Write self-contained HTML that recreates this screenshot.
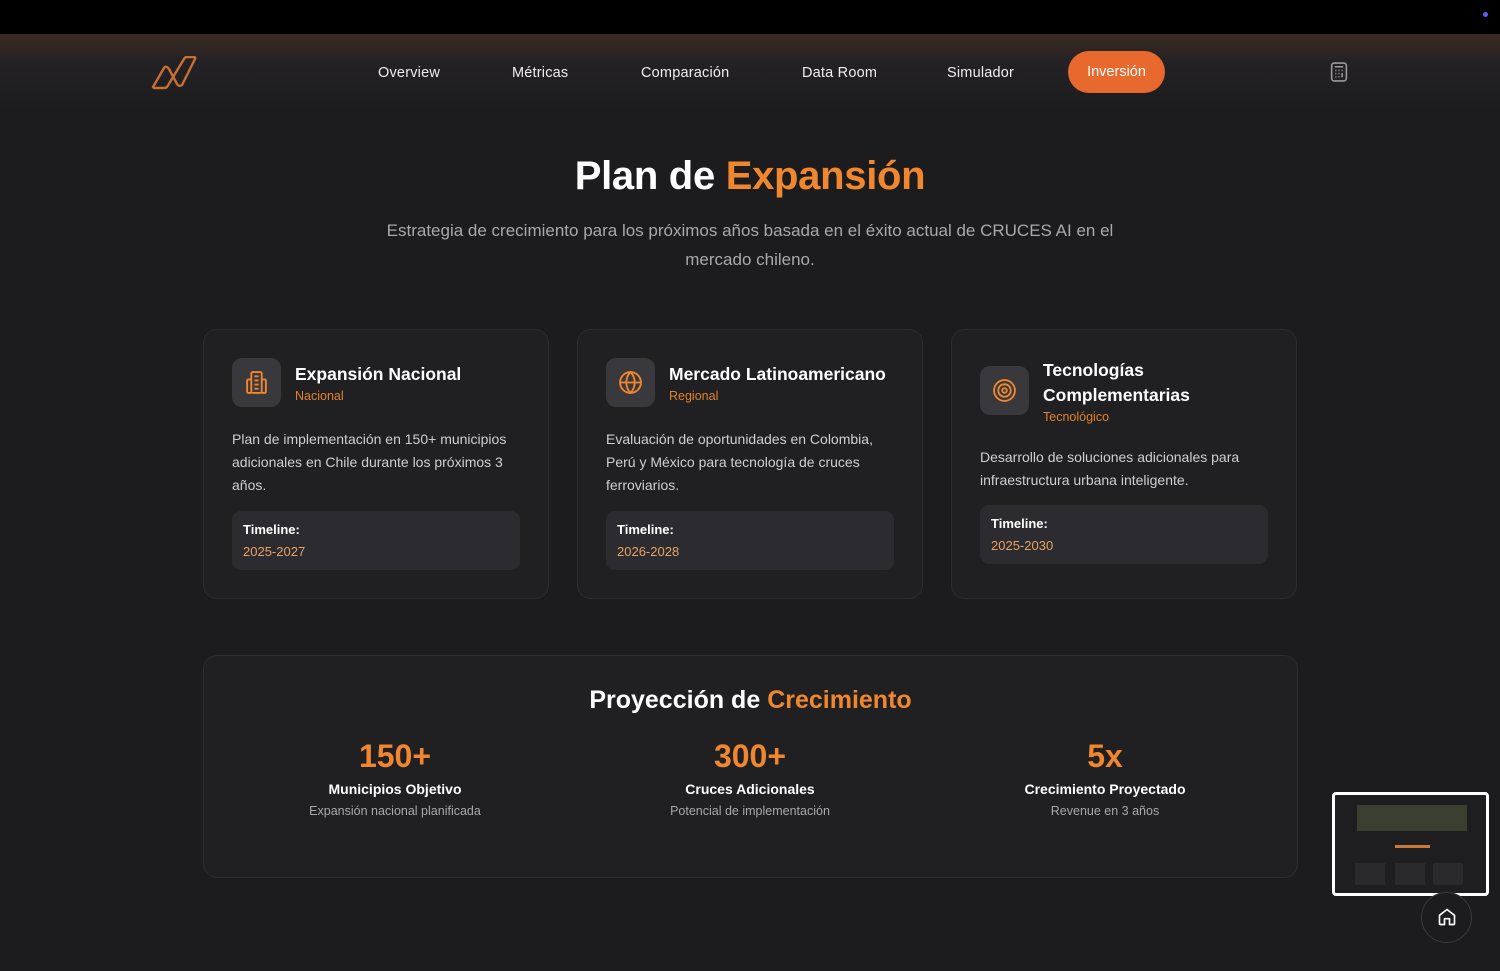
<!DOCTYPE html>
<html><head><meta charset="utf-8"><style>
*{margin:0;padding:0;box-sizing:border-box}
body{width:1500px;height:971px;background:#1c1c1f;font-family:"Liberation Sans",sans-serif;color:#fff;position:relative;overflow:hidden}
.top{position:absolute;top:0;left:0;width:1500px;height:34px;background:#000}
.dot{position:absolute;right:12px;top:12px;width:5px;height:5px;border-radius:50%;background:#5560ff}
.nav{position:absolute;top:34px;left:0;width:1500px;height:76px;background:linear-gradient(180deg,#3a2a22 0%,#232124 40%,#1c1c1f 100%)}
.nav a{position:absolute;top:31px;font-size:14.5px;color:#eee;letter-spacing:.2px}
.btn{position:absolute;left:1068px;top:17px;width:97px;height:42px;border-radius:21px;background:#e8692e;color:#fff;font-size:14.5px;text-align:center;line-height:43px}
h1{position:absolute;top:154px;width:1500px;text-align:center;font-size:40px;font-weight:bold;letter-spacing:-.3px}
.o{color:#f0872f}
.sub{position:absolute;top:217px;left:370px;width:760px;text-align:center;font-size:17px;line-height:28.5px;color:#a8a8ad}
.card{position:absolute;top:329px;width:346px;height:270px;background:#202023;border:1px solid #2d2d31;border-radius:14px}
.ic{position:absolute;left:28px;top:28px;width:49px;height:49px;border-radius:10px;background:#38383d}
.ic svg{position:absolute;left:12px;top:12px}
.ct{position:absolute;left:91px;font-size:17.5px;font-weight:bold;line-height:25px}
.cs{font-size:12.5px;color:#e0822e;font-weight:normal;line-height:16px;display:block;margin-top:1px}
.cd{position:absolute;left:28px;right:28px;font-size:14px;line-height:23px;color:#cfcfd2}
.tl{position:absolute;left:28px;right:28px;height:59px;background:#2c2c30;border-radius:9px;padding:11px 11px}
.tl b{font-size:13px;display:block;margin-bottom:6px}
.tl span{font-size:13px;color:#e8a265}
.proj{position:absolute;left:203px;top:655px;width:1095px;height:223px;background:#202023;border:1px solid #2d2d31;border-radius:14px}
.proj h2{position:absolute;top:30px;width:100%;text-align:center;font-size:25px}
.st{position:absolute;top:82px;width:300px;text-align:center}
.st .n{font-size:32px;font-weight:bold;color:#f0872f}
.st .l{font-size:14px;font-weight:bold;margin-top:6px}
.st .d{font-size:12.5px;color:#a8a8ad;margin-top:7px}
.thumb{position:absolute;left:1332px;top:792px;width:157px;height:104px;border:3px solid #fff;border-radius:4px;background:#1e1e20;overflow:hidden}
.home{position:absolute;left:1421px;top:892px;width:51px;height:51px;border-radius:50%;background:#1c1c1f;border:1px solid #3a3a3e}
</style></head><body>
<div class="top"><div class="dot"></div></div>
<div class="nav">
<svg style="position:absolute;left:151px;top:22px" width="46" height="34" viewBox="0 0 46 34" fill="none" stroke="#c86f33" stroke-width="2.4" stroke-linejoin="round"><path d="M2 31 L13 12 Q15 9 18 13 L26 28 Q28 31 31 29 L44 3 Q45 1 42 1 L36 1 Q34 1 33 3 L16 31 Q15 32 13 32 L3 32 Z"/></svg>
<a style="left:378px">Overview</a><a style="left:512px">Métricas</a><a style="left:641px">Comparación</a><a style="left:802px">Data Room</a><a style="left:947px">Simulador</a>
<div class="btn">Inversión</div>
<svg style="position:absolute;left:1330px;top:28px" width="18" height="20" viewBox="0 0 16 19" fill="none" stroke="#9a9a9f" stroke-width="1.5"><rect x="1" y="1" width="14" height="17" rx="2.5"/><path d="M4 4.5h8M4.5 8h1M7.5 8h1M10.5 8h1M4.5 11h1M7.5 11h1M4.5 14h1M7.5 14h1M11 10.5v4"/></svg>
</div>
<h1>Plan de <span class="o">Expansión</span></h1>
<div class="sub">Estrategia de crecimiento para los próximos años basada en el éxito actual de CRUCES AI en el mercado chileno.</div>

<div class="card" style="left:203px">
<div class="ic"><svg width="25" height="25" viewBox="0 0 24 24" fill="none" stroke="#f0872f" stroke-width="1.8" stroke-linejoin="round"><rect x="7" y="2" width="10" height="20" rx="1.5"/><path d="M7 9H4.5Q3 9 3 10.5V20.5Q3 22 4.5 22H7M17 9h2.5Q21 9 21 10.5V20.5Q21 22 19.5 22H17M10 6h4M10 10h4M10 14h4M10 18h4"/></svg></div>
<div class="ct" style="top:32px">Expansión Nacional<span class="cs">Nacional</span></div>
<div class="cd" style="top:98px">Plan de implementación en 150+ municipios adicionales en Chile durante los próximos 3 años.</div>
<div class="tl" style="top:181px"><b>Timeline:</b><span>2025-2027</span></div></div>

<div class="card" style="left:577px">
<div class="ic"><svg width="25" height="25" viewBox="0 0 24 24" fill="none" stroke="#f0872f" stroke-width="1.8"><circle cx="12" cy="12" r="10"/><path d="M2 12h20M12 2c3 3 4 6.5 4 10s-1 7-4 10c-3-3-4-6.5-4-10s1-7 4-10z"/></svg></div>
<div class="ct" style="top:32px">Mercado Latinoamericano<span class="cs">Regional</span></div>
<div class="cd" style="top:98px">Evaluación de oportunidades en Colombia, Perú y México para tecnología de cruces ferroviarios.</div>
<div class="tl" style="top:181px"><b>Timeline:</b><span>2026-2028</span></div></div>

<div class="card" style="left:951px">
<div class="ic" style="top:36px"><svg width="25" height="25" viewBox="0 0 24 24" fill="none" stroke="#f0872f" stroke-width="1.8"><circle cx="12" cy="12" r="10"/><circle cx="12" cy="12" r="6"/><circle cx="12" cy="12" r="2.2"/></svg></div>
<div class="ct" style="top:28px">Tecnologías<br>Complementarias<span class="cs">Tecnológico</span></div>
<div class="cd" style="top:116px">Desarrollo de soluciones adicionales para infraestructura urbana inteligente.</div>
<div class="tl" style="top:175px"><b>Timeline:</b><span>2025-2030</span></div></div>

<div class="proj"><h2>Proyección de <span class="o">Crecimiento</span></h2>
<div class="st" style="left:41px"><div class="n">150+</div><div class="l">Municipios Objetivo</div><div class="d">Expansión nacional planificada</div></div>
<div class="st" style="left:396px"><div class="n">300+</div><div class="l">Cruces Adicionales</div><div class="d">Potencial de implementación</div></div>
<div class="st" style="left:751px"><div class="n">5x</div><div class="l">Crecimiento Proyectado</div><div class="d">Revenue en 3 años</div></div>
</div>

<div class="thumb">
<div style="position:absolute;left:22px;top:10px;width:110px;height:26px;background:#3a3f30"></div>
<div style="position:absolute;left:60px;top:50px;width:35px;height:3px;background:#c87a3e"></div>
<div style="position:absolute;left:20px;top:68px;width:30px;height:22px;background:#2a2a2d"></div>
<div style="position:absolute;left:60px;top:68px;width:30px;height:22px;background:#2a2a2d"></div>
<div style="position:absolute;left:98px;top:68px;width:30px;height:22px;background:#2a2a2d"></div>
</div>
<div class="home"><svg style="position:absolute;left:15px;top:14px" width="20" height="20" viewBox="0 0 24 24" fill="none" stroke="#fff" stroke-width="2" stroke-linejoin="round"><path d="M3 10L12 3l9 7v10a1 1 0 0 1-1 1h-5v-7H9v7H4a1 1 0 0 1-1-1z"/></svg></div>
</body></html>
